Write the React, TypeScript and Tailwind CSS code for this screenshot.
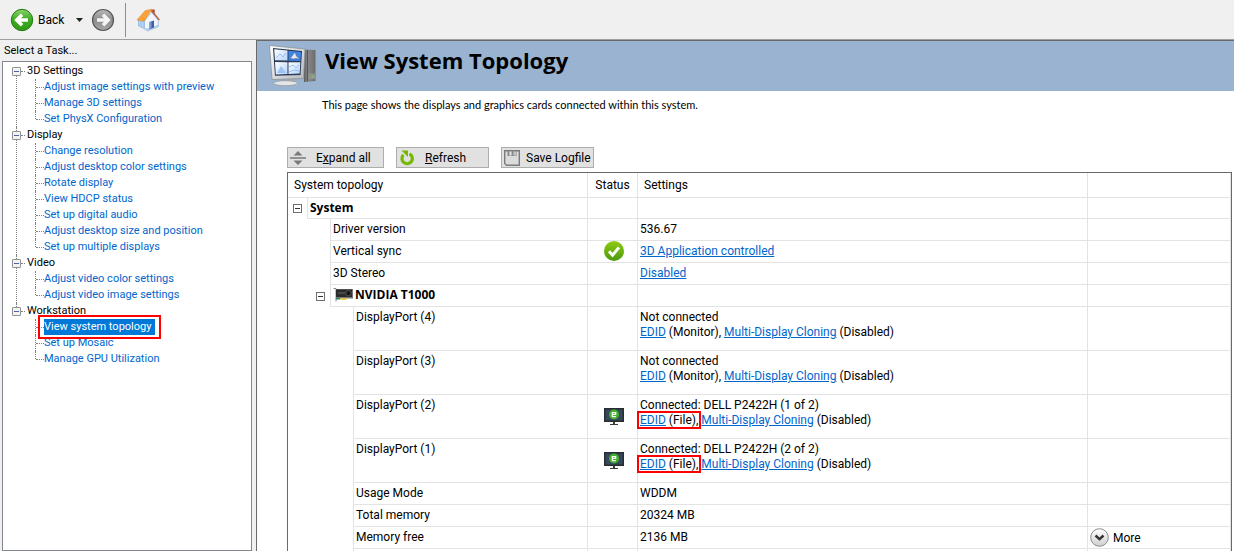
import React, { useState } from "react";

interface TaskGroup {
  name: string;
  tasks: string[];
}

const GROUPS: TaskGroup[] = [
  {
    name: "3D Settings",
    tasks: ["Adjust image settings with preview", "Manage 3D settings", "Set PhysX Configuration"],
  },
  {
    name: "Display",
    tasks: [
      "Change resolution",
      "Adjust desktop color settings",
      "Rotate display",
      "View HDCP status",
      "Set up digital audio",
      "Adjust desktop size and position",
      "Set up multiple displays",
    ],
  },
  { name: "Video", tasks: ["Adjust video color settings", "Adjust video image settings"] },
  {
    name: "Workstation",
    tasks: ["View system topology", "Set up Mosaic", "Manage GPU Utilization"],
  },
];

interface Port {
  id: number;
  monitor?: string;
}

const PORTS: Port[] = [
  { id: 4 },
  { id: 3 },
  { id: 2, monitor: "DELL P2422H (1 of 2)" },
  { id: 1, monitor: "DELL P2422H (2 of 2)" },
];

function BackIcon() {
  return (
    <svg width="24" height="24" viewBox="0 0 24 24">
      <defs>
        <linearGradient id="back" x1="0" y1="0" x2="0" y2="1">
          <stop offset="0" stopColor="#8fd36b" />
          <stop offset="0.45" stopColor="#3fae25" />
          <stop offset="1" stopColor="#2f9a12" />
        </linearGradient>
      </defs>
      <circle cx="12" cy="12" r="10.7" fill="url(#back)" stroke="#1f7a10" strokeWidth="1" />
      <path
        d="M18 12H7.5M12 6.8 6.8 12l5.2 5.2"
        fill="none"
        stroke="#fff"
        strokeWidth="3.6"
      />
    </svg>
  );
}

function ForwardIcon() {
  return (
    <svg width="24" height="24" viewBox="0 0 24 24">
      <defs>
        <linearGradient id="forward" x1="0" y1="0" x2="0" y2="1">
          <stop offset="0" stopColor="#b9b9b9" />
          <stop offset="0.5" stopColor="#8c8c8c" />
          <stop offset="1" stopColor="#a8a8a8" />
        </linearGradient>
      </defs>
      <circle cx="12" cy="12" r="10.5" fill="url(#forward)" stroke="#555" strokeWidth="1.2" />
      <path d="M6 12h10.5M12 6.8l5.2 5.2-5.2 5.2" fill="none" stroke="#f4f4f4" strokeWidth="3.6" />
    </svg>
  );
}

function HomeIcon() {
  return (
    <svg width="24" height="24" viewBox="0 0 24 24">
      <path d="M15.5 1.500h3.200v6h-3.200z" fill="#a5502e" />
      <path d="m2.500 12 6-1.500 4 12L2.500 18z" fill="#a9d0f2" stroke="#7fa9d3" strokeWidth="0.6" />
      <path d="M8.500 13 15.500 4l6.800 8.500v6.300L11.500 23l-3-2z" fill="#f1f6fc" stroke="#8fb0d2" strokeWidth="0.7" />
      <path d="m8.500 20 3 2.800L22.300 18.500v-1.800L11.500 20.500z" fill="#a9cdf0" />
      <path d="M1 12 9 2.800l6.800-1.600L8 13.200z" fill="#fba13a" stroke="#e58a28" strokeWidth="0.6" />
      <path d="M15.500 2.500 23.300 12" stroke="#b5664a" strokeWidth="1.500" fill="none" />
      <path d="M13.500 14 18 12.500v7l-4.500 1.700z" fill="#3f5f9f" />
      <path d="m13.500 14 2-.6v7l-2 .8z" fill="#7d9bd0" />
    </svg>
  );
}

function ComputerIcon() {
  return (
    <svg width="48" height="42" viewBox="0 0 48 42">
      <defs>
        <linearGradient id="tower" x1="0" y1="0" x2="1" y2="0">
          <stop offset="0" stopColor="#5a5a5a" />
          <stop offset="0.3" stopColor="#8a8a8a" />
          <stop offset="1" stopColor="#6c6c6c" />
        </linearGradient>
        <linearGradient id="frame" x1="0" y1="0" x2="1" y2="1">
          <stop offset="0" stopColor="#ffffff" />
          <stop offset="1" stopColor="#b4b9bd" />
        </linearGradient>
        <linearGradient id="pane" x1="0" y1="0" x2="1" y2="1">
          <stop offset="0" stopColor="#ffffff" />
          <stop offset="1" stopColor="#b5d3fa" />
        </linearGradient>
      </defs>
      <path d="M35 4.500 46.500 5v31L35 37z" fill="url(#tower)" />
      <path d="M38.500 5v31.500" stroke="#555" strokeWidth="1" />
      <path d="M39.500 28.500h6.500v5.500l-6.500.5z" fill="#8f9390" />
      <circle cx="44" cy="31.500" r="1" fill="#6fd04c" />
      <path d="m17 32 10 .5-2 5.500H15z" fill="#a9adb1" />
      <ellipse cx="16.500" cy="38.200" rx="12" ry="2.500" fill="#e3e5e6" stroke="#8f9499" strokeWidth="0.7" />
      <path d="M.5.500 36 4l-1.500 29.500L3 34.500z" fill="url(#frame)" stroke="#8b9299" strokeWidth="0.8" />
      <path d="M4 3 33 6l-1.500 24L6 30.800z" fill="#2a3a52" />
      <path d="m5.200 4.300 13.300 1.300v10L6 15.300z" fill="url(#pane)" />
      <path d="M19.500 5.800 32 7l-.6 9-11.900-.3z" fill="#3b86ee" />
      <path d="m6 17 12.500.2V29l-11.700.6z" fill="url(#pane)" />
      <path d="M19.500 17.300h11.800L30.700 28.500l-11.200.5z" fill="url(#pane)" />
      <path d="m21 13.500 5-6.500 1.500 4 3.500 3.500-4-1-2 .5z" fill="#e4e8ee" stroke="#38506f" strokeWidth="0.5" />
      <path d="m7 13 4-4 3 3 3-4M20 22l4-2 3 3 3-3M20 27l5-2 5 1" stroke="#8cb9f5" strokeWidth="0.9" fill="none" />
      <path d="m8 28 4-7 3 4 2 3z" fill="#9cc2f6" />
    </svg>
  );
}

function ExpandIcon() {
  return (
    <svg width="16" height="14" viewBox="0 0 16 14">
      <path d="M8 0 12.500 4.500h-9zM8 14l4.500-4.500h-9z" fill="#7a7a7a" />
      <path d="M0 7h16" stroke="#5e5e5e" strokeWidth="1.200" />
    </svg>
  );
}

function RefreshIcon() {
  return (
    <svg width="16" height="16" viewBox="0 0 16 16">
      <path d="M10.500 3.900A5.200 5.200 0 1 1 4.400 4.900" fill="none" stroke="#76b900" strokeWidth="3.200" />
      <path d="M2.500 0.500h6.500v6.500z" fill="#76b900" />
    </svg>
  );
}

function SaveIcon() {
  return (
    <svg width="16" height="16" viewBox="0 0 16 16">
      <path d="M.7.700h14.600v14.600H2.500L.7 13.500z" fill="#dcdcdc" stroke="#7b7b7b" strokeWidth="1.400" />
      <path d="M3.500 1h9v5h-9z" fill="#8a8a8a" />
      <path d="M5.500 1.500h2v4h-2z" fill="#e8e8e8" />
      <path d="M9.500 1.500h2.500v4H9.500z" fill="#c4c4c4" />
    </svg>
  );
}

function CheckIcon() {
  return (
    <svg width="20" height="20" viewBox="0 0 20 20" className="block">
      <defs>
        <linearGradient id="check" x1="0" y1="0" x2="0" y2="1">
          <stop offset="0" stopColor="#8ecb12" />
          <stop offset="1" stopColor="#4b9a0c" />
        </linearGradient>
      </defs>
      <circle cx="10" cy="10" r="10" fill="url(#check)" />
      <path d="m5 10.300 3.500 3.900L15 6.400" fill="none" stroke="#fff" strokeWidth="3" />
    </svg>
  );
}

function GpuIcon() {
  return (
    <svg width="20" height="14" viewBox="0 0 20 14" className="shrink-0">
      <path d="M.5.500H3v13" fill="none" stroke="#8a8a8a" strokeWidth="1" />
      <path d="M3 1h17v9.500H3z" fill="#777" />
      <path d="M3 1.500h16V9H3z" fill="#2b2b2b" />
      <path d="M5 5h7" stroke="#6b6b6b" />
      <circle cx="15.500" cy="5.200" r="2.700" fill="#161616" stroke="#5c5c5c" strokeWidth="0.800" />
      <path d="M3 10h4v1.500H3z" fill="#23835a" />
      <path d="M7.500 11h6" stroke="#e8c21c" strokeWidth="1.600" />
    </svg>
  );
}

function MonitorIcon() {
  return (
    <svg width="20" height="18" viewBox="0 0 20 18" className="block">
      <path d="M0 0h20v14H0z" fill="#2a2d30" />
      <path d="M1.500 1.500h17v11h-17z" fill="#34495c" />
      <path d="M9 14h2v2H9zM6 16h8v1H6z" fill="#3a3d40" />
      <circle cx="10" cy="6.500" r="5" fill="#43b02a" />
      <path d="M8.300 6.500h3.400V4.600H8.300v4h3.600" fill="none" stroke="#fff" strokeWidth="1.200" />
    </svg>
  );
}

function MoreIcon() {
  return (
    <svg width="19" height="19" viewBox="0 0 19 19">
      <defs>
        <linearGradient id="more" x1="0" y1="0" x2="0" y2="1">
          <stop offset="0" stopColor="#ffffff" />
          <stop offset="1" stopColor="#cfcfcf" />
        </linearGradient>
      </defs>
      <circle cx="9.500" cy="9.500" r="8.800" fill="url(#more)" stroke="#8a8a8a" />
      <path d="m5.500 7.500 4 3.700 4-3.700" fill="none" stroke="#333" strokeWidth="2.400" />
    </svg>
  );
}

function TaskTree() {
  const [selected, setSelected] = useState("View system topology");

  return (
    <ul className="flex-1 overflow-hidden border border-[#828790] bg-white py-px pl-[9px]">
      {GROUPS.map((group, g) => {
        const isLast = g === GROUPS.length - 1;
        return (
          <li key={group.name} className="flex">
            <div className="flex w-[9px] flex-col items-center">
              <span className={g === 0 ? "h-1" : "h-1 border-l border-dotted border-[#808080]"} />
              <button
                aria-label={`Collapse ${group.name}`}
                className="flex h-[9px] w-[9px] shrink-0 items-center justify-center rounded-[1px] border border-[#919191] bg-[#f4f4f4]"
              >
                <span className="h-px w-[5px] bg-[#4b63a7]" />
              </button>
              {!isLast && <span className="flex-1 border-l border-dotted border-[#808080]" />}
            </div>
            <div>
              <div className="flex h-4 items-center">
                <span className="mr-0.5 w-1 border-t border-dotted border-[#808080]" />
                <span>{group.name}</span>
              </div>
              <ul className="pl-[14px]">
                {group.tasks.map((task, i) => (
                  <li key={task} className="flex h-4 items-center">
                    <span
                      className={
                        i === group.tasks.length - 1
                          ? "h-2 self-start border-l border-dotted border-[#808080]"
                          : "h-4 border-l border-dotted border-[#808080]"
                      }
                    />
                    <span className="w-2 border-t border-dotted border-[#808080]" />
                    <a
                      href="#"
                      onClick={() => setSelected(task)}
                      className={
                        task === selected
                          ? "relative h-4 bg-[#0078d7] pr-1 text-white"
                          : "h-4 text-[#0066cc]"
                      }
                    >
                      {task}
                      {task === selected && (
                        <span className="absolute -inset-x-1.5 -top-1 -bottom-1 border-2 border-[#ff0000]" />
                      )}
                    </a>
                  </li>
                ))}
              </ul>
            </div>
          </li>
        );
      })}
    </ul>
  );
}

function Collapse({ label }: { label: string }) {
  return (
    <button
      aria-label={label}
      className="mr-[5px] ml-auto flex h-[9px] w-[9px] items-center justify-center border border-[#6e6e6e] bg-white"
    >
      <span className="h-px w-[5px] bg-[#333]" />
    </button>
  );
}

function Link({ children }: { children: React.ReactNode }) {
  return (
    <a href="#" className="text-[#0066cc] underline">
      {children}
    </a>
  );
}

const cell = "border-b border-l border-[#e3e3e3] px-0.5 align-top";
const boldCell = `${cell} pt-0.5 font-['Open_Sans',sans-serif] font-bold`;

interface RowProps {
  depth: 1 | 2;
  name: string;
  status?: React.ReactNode;
  extra?: React.ReactNode;
  tall?: boolean;
  children: React.ReactNode;
}

function Row({ depth, name, status, extra, tall, children }: RowProps) {
  return (
    <tr className={tall ? "h-11" : "h-[22px]"}>
      <td colSpan={depth + 1} />
      <td colSpan={3 - depth} className={`${cell} pt-0.5`}>
        {name}
      </td>
      <td className={`${cell} ${tall ? "pt-[13px]" : ""}`}>
        <div className="pl-3.5">{status}</div>
      </td>
      <td className={`${cell} pt-0.5`}>{children}</td>
      <td className={`${cell} border-r`}>{extra}</td>
    </tr>
  );
}

function TopologyTable() {
  return (
    <div className="mr-0.5 border border-[#696969]">
      <table className="w-full table-fixed border-separate border-spacing-0 text-left leading-4">
        <colgroup>
          <col className="w-[19px]" />
          <col className="w-[23px]" />
          <col className="w-[23px]" />
          <col className="w-[234px]" />
          <col className="w-[50px]" />
          <col />
          <col className="w-[144px]" />
        </colgroup>
        <thead>
          <tr className="h-[25px]">
            <th colSpan={4} className="border-b border-[#e3e3e3] pl-1.5 font-normal">
              System topology
            </th>
            <th className="border-b border-l border-[#e3e3e3] text-center font-normal">Status</th>
            <th className="border-b border-l border-[#e3e3e3] pl-1.5 font-normal">Settings</th>
            <th className="border-x border-b border-[#e3e3e3]" />
          </tr>
        </thead>
        <tbody>
          <tr className="h-[21px]">
            <td>
              <Collapse label="Collapse System" />
            </td>
            <td colSpan={3} className={boldCell}>
              System
            </td>
            <td className={cell} />
            <td className={cell} />
            <td className={`${cell} border-r`} />
          </tr>
          <Row depth={1} name="Driver version">
            536.67
          </Row>
          <Row depth={1} name="Vertical sync" status={<CheckIcon />}>
            <Link>3D Application controlled</Link>
          </Row>
          <Row depth={1} name="3D Stereo">
            <Link>Disabled</Link>
          </Row>
          <tr className="h-[22px]">
            <td />
            <td>
              <Collapse label="Collapse NVIDIA T1000" />
            </td>
            <td colSpan={2} className={boldCell}>
              <div className="flex items-center gap-0.5">
                <GpuIcon />
                <span>NVIDIA T1000</span>
              </div>
            </td>
            <td className={cell} />
            <td className={cell} />
            <td className={`${cell} border-r`} />
          </tr>
          {PORTS.map((port) => (
            <Row
              key={port.id}
              depth={2}
              tall
              name={`DisplayPort (${port.id})`}
              status={port.monitor && <MonitorIcon />}
            >
              <div className="h-[15px]">
                {port.monitor ? `Connected: ${port.monitor}` : "Not connected"}
              </div>
              <div>
                <span className="relative">
                  <Link>EDID</Link> {port.monitor ? "(File)," : "(Monitor),"}
                  {port.monitor && (
                    <span className="absolute -inset-x-[3px] -inset-y-0.5 border-2 border-[#ff0000]" />
                  )}
                </span>{" "}
                <Link>Multi-Display Cloning</Link> (Disabled)
              </div>
            </Row>
          ))}
          <Row depth={2} name="Usage Mode">
            WDDM
          </Row>
          <Row depth={2} name="Total memory">
            20324 MB
          </Row>
          <Row
            depth={2}
            name="Memory free"
            extra={
              <button className="flex h-[21px] items-center gap-1">
                <MoreIcon />
                More
              </button>
            }
          >
            2136 MB
          </Row>
          <Row depth={2} name="">
            {""}
          </Row>
        </tbody>
      </table>
    </div>
  );
}

const toolButton =
  "flex h-[21px] items-center border border-[#adadad] bg-[#e1e1e1] pl-0.5 hover:bg-[#e5f1fb]";

export default function App() {
  return (
    <div className="flex h-screen flex-col overflow-hidden bg-[#f0f0f0] font-['Roboto','Noto_Sans',sans-serif] text-[12px] text-black">
      <header className="flex h-10 shrink-0 items-center border-b border-[#a0a0a0] pl-2.5">
        <button className="flex items-center gap-1">
          <BackIcon />
          Back
        </button>
        <button aria-label="History" className="px-3">
          <svg width="7" height="4" viewBox="0 0 7 4">
            <path d="M0 0h7L3.500 4z" fill="#222" />
          </svg>
        </button>
        <button aria-label="Forward" className="-ml-1">
          <ForwardIcon />
        </button>
        <span className="mx-2.5 h-[34px] w-px bg-[#8c8c8c]" />
        <button aria-label="Home">
          <HomeIcon />
        </button>
      </header>

      <div className="flex min-h-0 flex-1">
        <aside className="flex w-64 shrink-0 flex-col pr-1 pl-0.5 text-[11px] leading-4">
          <h2 className="flex h-[21px] items-center pl-0.5">Select a Task...</h2>
          <TaskTree />
        </aside>

        <main className="min-w-0 flex-1 overflow-hidden border-t border-l border-[#696969] bg-white">
          <div className="flex h-[50px] items-center gap-2 bg-[#99b3d1] pl-3">
            <ComputerIcon />
            <h1 className="pb-3 font-['Open_Sans',sans-serif] text-[22px] font-bold">
              View System Topology
            </h1>
          </div>
          <p className="pt-1.5 pl-[65px] font-['Lato',sans-serif] text-[11px] leading-4">
            This page shows the displays and graphics cards connected within this system.
          </p>
          <div className="pt-[34px] pl-[30px]">
            <div className="mb-1 flex gap-3">
              <button className={`${toolButton} w-[97px] gap-2.5`}>
                <ExpandIcon />
                <span>
                  E<u>x</u>pand all
                </span>
              </button>
              <button className={`${toolButton} w-[93px] gap-2.5`}>
                <RefreshIcon />
                <span>
                  <u>R</u>efresh
                </span>
              </button>
              <button className={`${toolButton} w-[93px] gap-1.5`}>
                <SaveIcon />
                Save Logfile
              </button>
            </div>
            <TopologyTable />
          </div>
        </main>
      </div>
    </div>
  );
}
